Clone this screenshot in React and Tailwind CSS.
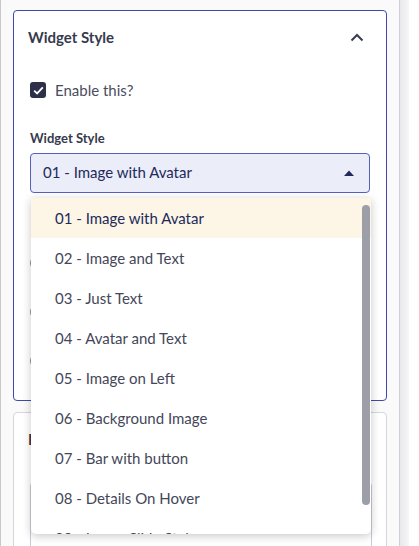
import React from 'react';

const options = [
    '01 - Image with Avatar',
    '02 - Image and Text',
    '03 - Just Text',
    '04 - Avatar and Text',
    '05 - Image on Left',
    '06 - Background Image',
    '07 - Bar with button',
    '08 - Details On Hover',
    '09 - Image Slide Style',
];

export default function App() {
    return (
        <div
            className="relative w-[419px] h-[546px] overflow-hidden flex bg-[#fafafa]"
            style={{ fontFamily: 'Lato, "Noto Sans", sans-serif' }}
        >
            <div className="w-px h-full bg-[#c9c9cc]" />

            {/* main column */}
            <div className="w-[398px] pt-[10px] pl-[12px] flex flex-col gap-[11px]">
                {/* Widget Style panel */}
                <div className="shrink-0 w-[374px] h-[391px] border border-[#3f49ad] rounded-[4px] bg-white flex flex-col">
                    <div className="h-[52px] pl-[14px] pr-[22px] flex items-center justify-between">
                        <span className="text-[15px] font-bold text-[#363a4d]">Widget Style</span>
                        <svg width="14" height="9" viewBox="0 0 14 9" fill="none">
                            <path d="M1.5 7.5 L7 2 L12.5 7.5" stroke="#3a3d52" strokeWidth="2" />
                        </svg>
                    </div>

                    <div className="px-[16px] flex flex-col">
                        <label className="flex items-center gap-[9px] mt-[11px] h-[32px]">
                            <span className="w-[16px] h-[16px] rounded-[3px] bg-[#2d3049] flex items-center justify-center">
                                <svg width="11" height="9" viewBox="0 0 11 9" fill="none">
                                    <path d="M1.2 4.6 L4.1 7.4 L9.8 1.4" stroke="white" strokeWidth="1.8" />
                                </svg>
                            </span>
                            <span className="text-[15px] text-[#4a4d5f]">Enable this?</span>
                        </label>

                        <div className="mt-[23px] text-[13px] font-bold text-[#363a4d]">Widget Style</div>

                        <div className="mt-[4px] h-[40px] rounded-[4px] border border-[#5560ba] bg-[#ebedf8] pl-[12px] pr-[15px] flex items-center justify-between">
                            <span className="text-[15px] text-[#222a5c]">01 - Image with Avatar</span>
                            <svg width="10" height="6" viewBox="0 0 10 6">
                                <path d="M0 6 L5 0.5 L10 6 Z" fill="#222a5c" />
                            </svg>
                        </div>

                        {/* fields hidden behind the open menu */}
                        <div className="mt-[62px] flex flex-col gap-[33px]">
                            <div className="w-[16px] h-[16px] rounded-full border border-[#8c8e99]" />
                            <div className="w-[16px] h-[16px] rounded-full border border-[#8c8e99]" />
                            <div className="w-[16px] h-[16px] rounded-full border border-[#8c8e99]" />
                        </div>
                    </div>
                </div>

                {/* next panel */}
                <div className="shrink-0 w-[374px] h-[200px] border border-[#d5d6de] rounded-t-[4px] bg-white px-[14px] pt-[15px]">
                    <div className="text-[15px] font-bold text-[#363a4d]">Heading</div>
                    <div className="mt-[31px] ml-[2px] h-[80px] border border-[#c9cad3] rounded-[4px]" />
                </div>
            </div>

            {/* right edge track */}
            <div className="w-[10px] h-full border-l border-[#cfd0da] bg-gradient-to-r from-[#e9e9ec] to-[#f6f6f7]" />
            <div className="flex-1 h-full bg-white" />

            {/* open dropdown menu */}
            <div className="absolute left-[31px] top-[198px] w-[340px] h-[336px] bg-white rounded-b-[5px] shadow-[0_2px_10px_rgba(0,0,0,0.22)] overflow-hidden">
                {options.map((opt, i) => (
                    <div
                        key={opt}
                        className={
                            i === 0
                                ? 'h-[40px] pl-[24px] flex items-center text-[15px] text-[#222a5c] bg-[#fdf6e6]'
                                : 'h-[40px] pl-[24px] flex items-center text-[15px] text-[#444759]'
                        }
                    >
                        {opt}
                    </div>
                ))}
                <div className="absolute right-[1px] top-[7px] w-[8px] h-[300px] rounded-[4px] bg-[#9c9ea8]" />
            </div>
        </div>
    );
}
